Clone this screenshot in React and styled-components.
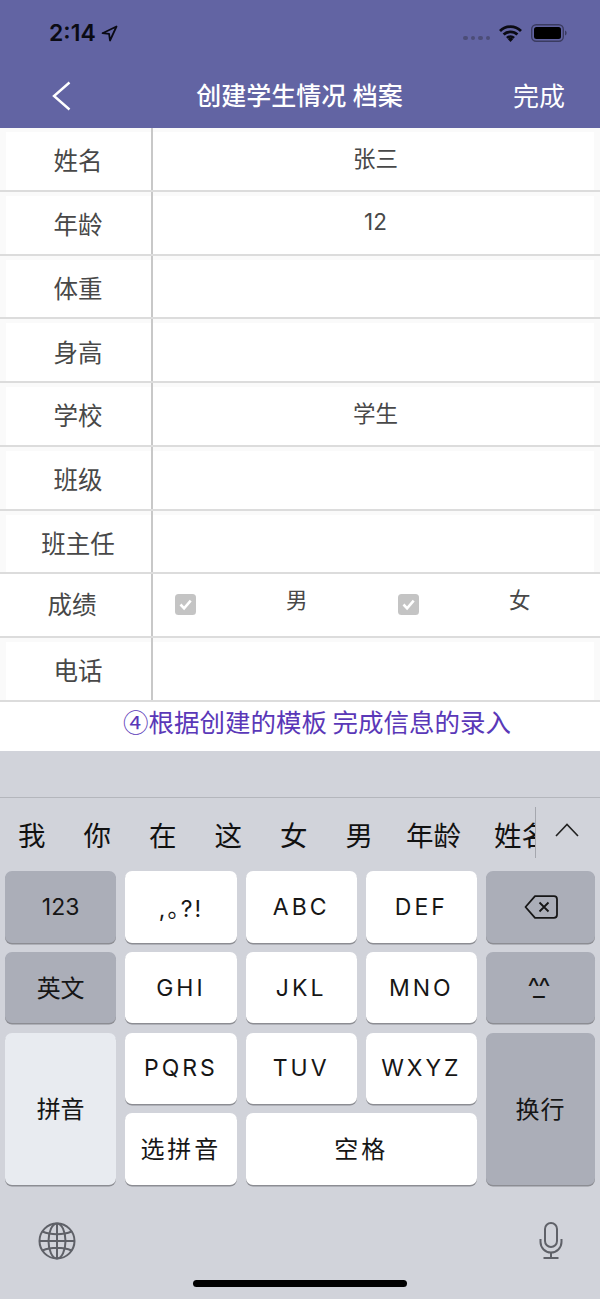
import styled, { createGlobalStyle } from "styled-components"

const GlobalStyle = createGlobalStyle`
	html, body {
		margin: 0;
		padding: 0;
		background: #fff;
		font-family: Inter, "Noto Sans CJK SC", sans-serif;
	}
`

const Page = styled.div`
	width: 600px;
	height: 1299px;
	overflow: hidden;
	display: flex;
	flex-direction: column;
`

const Header = styled.header`
	height: 128px;
	background: #6264a3;
	flex: none;
`

const StatusBar = styled.div`
	height: 64px;
	display: flex;
	align-items: center;
	padding: 2px 33px 0 49px;
	box-sizing: border-box;
`

const Time = styled.span`
	font-size: 23px;
	font-weight: 600;
	color: #0b0b14;
	margin-right: 5px;
`

const StatusRight = styled.div`
	margin-left: auto;
	display: flex;
	align-items: center;
	gap: 9px;
`

const Signal = styled.div`
	display: flex;
	gap: 3px;
	margin-top: 10px;
`

const Dot = styled.span`
	width: 4.5px;
	height: 4.5px;
	border-radius: 50%;
	background: #4c4d78;
`

const Nav = styled.nav`
	height: 64px;
	display: grid;
	grid-template-columns: 1fr auto 1fr;
	align-items: center;
	padding: 0 35px 0 52px;
	color: #fff;
`

const Title = styled.h1`
	margin: 0 0 0 -18px;
	padding-bottom: 4px;
	font-size: 25px;
	font-weight: 500;
`

const Done = styled.span`
	justify-self: end;
	padding-bottom: 4px;
	font-size: 26px;
`

const Form = styled.div`
	flex: none;
	background: #fafafa;
`

const Row = styled.div`
	height: 63.75px;
	box-sizing: border-box;
	display: flex;
	border-bottom: 2px solid #dcdcdc;
	background: ${p => (p.$plain ? "#fff" : "#fafafa")};
`

const Label = styled.div`
	flex: none;
	box-sizing: border-box;
	margin: ${p => (p.$plain ? "0" : "4px 0 0 6px")};
	width: ${p => (p.$plain ? "151px" : "145px")};
	background: #fff;
	display: flex;
	align-items: center;
	justify-content: center;
	padding: ${p => (p.$plain ? "0 7px 4px 0" : "0 1px 2px 0")};
	font-size: 24.5px;
	color: #484848;
`

const Divider = styled.div`
	width: 2px;
	flex: none;
	background: #c8c8c8;
`

const Value = styled.div`
	flex: 1;
	margin: 4px 6px 0 0;
	background: #fff;
	display: flex;
	align-items: center;
	justify-content: center;
	padding: 0 0 7px 4px;
	font-size: 22.5px;
	color: #484848;
`

const Options = styled.div`
	flex: 1;
	display: flex;
	background: #fff;
`

const Option = styled.div`
	width: 223px;
	flex: none;
	display: flex;
	padding-left: 22px;
	box-sizing: border-box;
	font-size: 21.5px;
	color: #484848;
`

const Check = styled.svg`
	width: 21px;
	height: 21px;
	margin-top: 20px;
	flex: none;
`

const OptionText = styled.span`
	margin-left: 90px;
	margin-top: 9px;
`

const Caption = styled.div`
	height: 49.5px;
	flex: none;
	background: #fff;
	display: flex;
	align-items: center;
	justify-content: center;
	padding: 0 0 13px 34px;
	font-family: "Noto Sans CJK SC", sans-serif;
	font-size: 25.5px;
	color: #5a38b8;
	box-sizing: border-box;
`

const Keyboard = styled.div`
	flex: 1;
	background: #d1d3da;
	display: flex;
	flex-direction: column;
`

const Spacer = styled.div`
	height: 46px;
	border-bottom: 1px solid #b4b6bc;
	flex: none;
`

const Candidates = styled.div`
	height: 73px;
	flex: none;
	display: flex;
	align-items: center;
`

const CandidateList = styled.div`
	width: 535px;
	flex: none;
	overflow: hidden;
	display: flex;
	gap: 38px;
	padding: 0 0 1px 18px;
	box-sizing: border-box;
	font-size: 27.5px;
	color: #111;
	white-space: nowrap;
`

const Candidate = styled.span`
	flex: none;
	margin-left: ${p => (p.$tight ? "-5px" : "0")};
`

const CandidateMore = styled.div`
	flex: 1;
	align-self: stretch;
	margin: 9px 0 13px;
	border-left: 1px solid #a5a7ae;
	display: flex;
	justify-content: center;
	padding: 16px 2px 0 0;
`

const Keys = styled.div`
	display: grid;
	grid-template-columns: repeat(4, 111.25px) 109px;
	grid-template-rows: repeat(4, 71.5px);
	gap: 9.2px 9px;
	padding: 0 5px;
	box-sizing: border-box;
	flex: none;
`

const Key = styled.div`
	grid-column: ${p => p.$col || "auto"};
	grid-row: ${p => p.$row || "auto"};
	border-radius: 7px;
	display: flex;
	align-items: center;
	justify-content: center;
	padding-bottom: ${p => (p.$cjk ? "3px" : "0")};
	font-size: ${p => (p.$cjk ? "24px" : "23px")};
	letter-spacing: ${p => p.$spacing || "3px"};
	font-feature-settings: ${p => (p.$proportional ? '"palt"' : "normal")};
	color: #161616;
	background: ${p => (p.$kind === "fn" ? "#abaeb8" : p.$kind === "soft" ? "#e8ebf0" : "#fff")};
	box-shadow: 0 1.5px 0 #8c8d93;
`

const Emoticon = styled.span`
	font-size: 26px;
	letter-spacing: -5px;
	margin-left: -8px;
	padding-bottom: 3px;
`

const Bottom = styled.div`
	flex: 1;
	position: relative;
	display: flex;
	justify-content: space-between;
	padding: 37px 37px 0 38px;
`

const HomeBar = styled.div`
	position: absolute;
	left: 193px;
	top: 95px;
	width: 214px;
	height: 7px;
	border-radius: 4px;
	background: #000;
`

const CheckBox = () => (
	<Check viewBox="0 0 21 21">
		<rect width="21" height="21" rx="3.5" fill="#c4c4c4" />
		<path d="M5.5 10.5l3.6 3.8 6.6-7.6" fill="none" stroke="#fff" strokeWidth="2.6" />
	</Check>
)

const rows = [
	{ label: "姓名", value: "张三" },
	{ label: "年龄", value: "12" },
	{ label: "体重" },
	{ label: "身高" },
	{ label: "学校", value: "学生" },
	{ label: "班级" },
	{ label: "班主任" },
	{ label: "成绩", options: ["男", "女"] },
	{ label: "电话" },
]

const candidates = ["我", "你", "在", "这", "女", "男", "年龄", "姓名"]

export default function App() {
	return (
		<Page>
			<GlobalStyle />
			<Header>
				<StatusBar>
					<Time>2:14</Time>
					<svg width="17" height="17" viewBox="0 0 17 17">
						<path d="M15.5 1.5L1.5 8.2l6.6.6.9 6.7z" fill="none" stroke="#0b0b14" strokeWidth="1.8" strokeLinejoin="round" />
					</svg>
					<StatusRight>
						<Signal>
							<Dot /><Dot /><Dot /><Dot />
						</Signal>
						<svg width="23" height="17" viewBox="0 0 23 17">
							<path d="M1 6a15 15 0 0 1 21 0M4.6 9.6a10 10 0 0 1 13.8 0M8 13a5 5 0 0 1 7 0" fill="none" stroke="#0b0b14" strokeWidth="2.8" />
							<path d="M11.5 17l-2.6-2.8a3.6 3.6 0 0 1 5.2 0z" fill="#0b0b14" />
						</svg>
						<svg width="36" height="18" viewBox="0 0 36 18">
							<rect x="0.7" y="0.7" width="31.6" height="16.6" rx="4.5" fill="none" stroke="#3a3b60" strokeWidth="1.4" />
							<rect x="3" y="3" width="27" height="12" rx="2.5" fill="#000" />
							<path d="M34 6.5c1.2.4 1.6 1.4 1.6 2.5s-.4 2.1-1.6 2.5z" fill="#3a3b60" />
						</svg>
					</StatusRight>
				</StatusBar>
				<Nav>
					<svg width="19" height="30" viewBox="0 0 19 30">
						<path d="M17.5 1.5L2 15l15.5 13.5" fill="none" stroke="#fff" strokeWidth="2.4" />
					</svg>
					<Title>创建学生情况 档案</Title>
					<Done>完成</Done>
				</Nav>
			</Header>
			<Form>
				{rows.map(row => (
					<Row key={row.label} $plain={!!row.options}>
						<Label $plain={!!row.options}>{row.label}</Label>
						<Divider />
						{row.options ? (
							<Options>
								{row.options.map(option => (
									<Option key={option}>
										<CheckBox />
										<OptionText>{option}</OptionText>
									</Option>
								))}
							</Options>
						) : (
							<Value>{row.value}</Value>
						)}
					</Row>
				))}
			</Form>
			<Caption>④根据创建的模板 完成信息的录入</Caption>
			<Keyboard>
				<Spacer />
				<Candidates>
					<CandidateList>
						{candidates.map(word => (
							<Candidate key={word} $tight={word.length > 1}>{word}</Candidate>
						))}
					</CandidateList>
					<CandidateMore>
						<svg width="24" height="14" viewBox="0 0 24 14">
							<path d="M1 13L12 1.5 23 13" fill="none" stroke="#222" strokeWidth="1.6" />
						</svg>
					</CandidateMore>
				</Candidates>
				<Keys>
					<Key $kind="fn" $spacing="0">123</Key>
					<Key $proportional $spacing="2px">,。?!</Key>
					<Key>ABC</Key>
					<Key>DEF</Key>
					<Key $kind="fn">
						<svg width="34" height="24" viewBox="0 0 34 24">
							<path d="M11 1.2h19a3 3 0 0 1 3 3v15.6a3 3 0 0 1-3 3H11L1.5 12z" fill="none" stroke="#161616" strokeWidth="1.8" strokeLinejoin="round" />
							<path d="M15.5 7.5l9 9M24.5 7.5l-9 9" fill="none" stroke="#161616" strokeWidth="1.8" />
						</svg>
					</Key>
					<Key $kind="fn" $cjk $spacing="0">英文</Key>
					<Key>GHI</Key>
					<Key>JKL</Key>
					<Key>MNO</Key>
					<Key $kind="fn" $spacing="0"><Emoticon>^_^</Emoticon></Key>
					<Key $kind="soft" $cjk $row="3 / span 2" $spacing="0">拼音</Key>
					<Key>PQRS</Key>
					<Key>TUV</Key>
					<Key>WXYZ</Key>
					<Key $kind="fn" $cjk $row="3 / span 2" $spacing="1px">换行</Key>
					<Key $col="2" $row="4" $cjk>选拼音</Key>
					<Key $col="3 / span 2" $row="4" $cjk>空格</Key>
				</Keys>
				<Bottom>
					<svg width="38" height="38" viewBox="0 0 38 38">
						<g fill="none" stroke="#5f6168" strokeWidth="2">
							<circle cx="19" cy="19" r="17.5" />
							<ellipse cx="19" cy="19" rx="8.5" ry="17.5" />
							<path d="M19 1.5v35M1.5 19h35M4.5 9.5c8 3.6 21 3.6 29 0M4.5 28.5c8-3.6 21-3.6 29 0" />
						</g>
					</svg>
					<svg width="24" height="37" viewBox="0 0 24 37">
						<g fill="none" stroke="#5f6168" strokeWidth="2">
							<rect x="6" y="1" width="12" height="24" rx="6" />
							<path d="M1.5 17v3a10.5 10.5 0 0 0 21 0v-3M12 30.5V36M4.5 36h15" />
						</g>
					</svg>
					<HomeBar />
				</Bottom>
			</Keyboard>
		</Page>
	)
}
